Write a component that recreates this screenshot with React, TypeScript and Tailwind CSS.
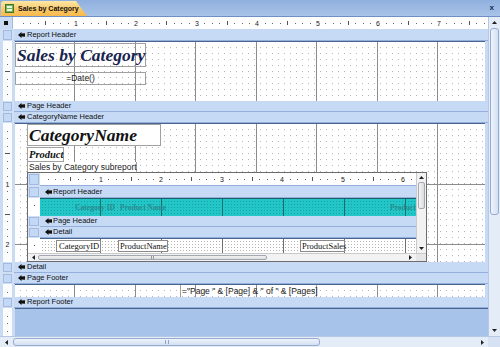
import React from "react";

const INCH = 60.5;

// design surface backgrounds: inch lines on top of a dot grid
const GRID_MAIN =
  "bg-white [background-image:repeating-linear-gradient(90deg,transparent_0_59.5px,#8c8c8c_59.5px_60.5px),repeating-linear-gradient(180deg,transparent_0_59.5px,#8c8c8c_59.5px_60.5px),linear-gradient(90deg,#fff_5px,transparent_5px),linear-gradient(#fff_5px,#b8b8b8_5px)] [background-size:auto,auto,6px_6px,6px_6px]";
const GRID_TEAL =
  "bg-[#20c3c3] [background-image:repeating-linear-gradient(90deg,transparent_0_60px,#166f6f_60px_61px),linear-gradient(90deg,#22c6c6_2px,transparent_2px),linear-gradient(#22c6c6_2px,#17a3a3_2px)] [background-size:auto,3px_3px,3px_3px]";
const GRID_FINE =
  "bg-white [background-image:repeating-linear-gradient(90deg,transparent_0_60px,#707070_60px_61px),linear-gradient(90deg,#fff_2px,transparent_2px),linear-gradient(#fff_2px,#b4b4b4_2px)] [background-size:auto,3px_3px,3px_3px]";

function HRuler({ width, origin, height }: { width: number; origin: number; height: number }) {
  const marks: React.ReactNode[] = [];
  const mid = Math.floor(height / 2);
  for (let i = 1; origin + (i * INCH) / 8 < width - 2; i++) {
    const x = Math.round(origin + (i * INCH) / 8);
    if (i % 8 === 0)
      marks.push(
        <text key={i} x={x} y={mid + 3} fontSize={7} textAnchor="middle" fill="#1a1a1a" fontFamily="Liberation Sans, Arial, sans-serif">
          {i / 8}
        </text>,
      );
    else if (i % 4 === 0) marks.push(<rect key={i} x={x} y={mid - 2} width={1} height={4} fill="#555" />);
    else marks.push(<rect key={i} x={x} y={mid} width={1} height={1} fill="#666" />);
  }
  return (
    <svg width={width} height={height} className="block">
      {marks}
    </svg>
  );
}

function VRuler({ height }: { height: number }) {
  const marks: React.ReactNode[] = [];
  for (let i = 1; (i * INCH) / 8 < height - 2; i++) {
    const y = Math.round((i * INCH) / 8);
    if (i % 8 === 0)
      marks.push(
        <text key={i} x={4.5} y={y + 3} fontSize={7} textAnchor="middle" fill="#1a1a1a" fontFamily="Liberation Sans, Arial, sans-serif">
          {i / 8}
        </text>,
      );
    else if (i % 4 === 0) marks.push(<rect key={i} x={2} y={y} width={5} height={1} fill="#555" />);
    else marks.push(<rect key={i} x={4} y={y} width={1} height={1} fill="#666" />);
  }
  return (
    <svg width={9} height={height} className="block">
      {marks}
    </svg>
  );
}

function Tri({ dir }: { dir: "up" | "down" | "left" | "right" }) {
  const vertical = dir === "up" || dir === "down";
  const pts = {
    up: "0,3 2.5,0 5,3",
    down: "0,0 5,0 2.5,3",
    left: "3,0 3,5 0,2.5",
    right: "0,0 0,5 3,2.5",
  }[dir];
  return (
    <svg width={vertical ? 5 : 3} height={vertical ? 3 : 5} className="block">
      <polygon points={pts} fill="#222" />
    </svg>
  );
}

function SectionIcon() {
  return (
    <svg width={7} height={6} className="block shrink-0">
      <path d="M0 3 L3.5 0 L3.5 1.6 L7 1.2 L7 4.8 L3.5 4.4 L3.5 6 Z" fill="#111" />
    </svg>
  );
}

function MainBar({ label, hClass }: { label: string; hClass: string }) {
  return (
    <div className={`flex shrink-0 ${hClass}`}>
      <div className="flex w-[14px] bg-[#d0dff4] py-px pr-[2px] pl-[3px]">
        <div className="flex-1 border border-[#a2bae0] bg-[#c3d8f4]" />
      </div>
      <div className="flex flex-1 items-center gap-[2px] border-b border-[#94afdb] bg-[#c6daf6] pl-[4px] text-[7.5px] text-[#111]">
        <SectionIcon />
        <span>{label}</span>
      </div>
    </div>
  );
}

function SubBar({ label, hClass }: { label: string; hClass: string }) {
  return (
    <div className={`flex shrink-0 ${hClass}`}>
      <div className="flex w-[12px] bg-[#d0dff4] p-px">
        <div className="flex-1 border border-[#a2bae0] bg-[#c3d8f4]" />
      </div>
      <div className="flex flex-1 items-center gap-px border-b border-[#94afdb] bg-[#c6daf6] pl-[5px] text-[7.5px] text-[#111]">
        <SectionIcon />
        <span>{label}</span>
      </div>
    </div>
  );
}

function MainSection({ hClass, rulerH, children }: { hClass: string; rulerH: number; children?: React.ReactNode }) {
  return (
    <div className={`flex shrink-0 ${hClass}`}>
      <div className="w-[15px] bg-[#cbdbf2] px-[3px]">
        <div className="h-full overflow-hidden bg-[#fbfcfe]">
          <VRuler height={rulerH} />
        </div>
      </div>
      <div className={`w-[470px] border-t border-[#48658f] ${GRID_MAIN}`}>{children}</div>
      <div className="w-[3px] bg-[#c6daf6]" />
    </div>
  );
}

function SubGutter() {
  return (
    <div className="flex w-[12px] shrink-0 justify-center bg-white">
      <div className="mt-[7px] h-px w-px bg-[#555]" />
    </div>
  );
}

export default function App() {
  return (
    <div className="flex h-[347px] w-[500px] flex-col overflow-hidden bg-[#c6daf6] font-['Liberation_Sans',Arial,sans-serif]">
      {/* document tab strip */}
      <div className="flex h-[17px] shrink-0 items-end justify-between border-b border-[#6f8fc4] bg-[linear-gradient(#8fb0de,#a9c3e8)] pl-px">
        <div className="flex h-[15px] w-[86px] items-center gap-[4px] rounded-tl-[3px] bg-[linear-gradient(#fde7a6,#fbc867_55%,#f8b94b)] pl-[4px] [clip-path:polygon(0_0,75px_0,86px_100%,0_100%)]">
          <svg width={9} height={9} className="block shrink-0">
            <rect x={0.5} y={0.5} width={8} height={8} fill="#78b35c" stroke="#3d7a2b" />
            <rect x={2} y={2} width={5} height={2} fill="#eaf6e2" />
            <rect x={2} y={5} width={5} height={2} fill="#eaf6e2" />
          </svg>
          <span className="text-[7px] leading-none font-bold text-[#111]">Sales by Category</span>
        </div>
        <span className="mr-[6px] mb-[4px] text-[8px] leading-none font-bold text-[#1c2c4c]">x</span>
      </div>

      <div className="flex h-[319px] shrink-0">
        <div className="flex w-[488px] flex-col">
          {/* top ruler */}
          <div className="flex h-[12px] shrink-0">
            <div className="flex w-[13px] items-center justify-center border-r border-[#a2bae0] bg-[#c9daf3]">
              <div className="h-[4px] w-[4px] bg-[#111]" />
            </div>
            <div className="flex-1 bg-white">
              <HRuler width={475} origin={2} height={12} />
            </div>
          </div>

          <MainBar label="Report Header" hClass="h-[12px]" />
          <MainSection hClass="h-[60px]" rulerH={59}>
            <div className="flex flex-col">
              <div className="mt-px flex h-[24px] w-[131px] items-center border border-[#a0a0a0] pl-px font-['Liberation_Serif','Times_New_Roman',serif] text-[17.5px] font-bold whitespace-nowrap text-[#17244f] italic">
                Sales by Category
              </div>
              <div className="mt-[5px] flex h-[13px] w-[131px] items-center justify-center border border-[#a0a0a0] text-[8.5px] text-[#222]">
                =Date()
              </div>
            </div>
          </MainSection>
          <MainBar label="Page Header" hClass="h-[11px]" />
          <MainBar label="CategoryName Header" hClass="h-[11px]" />
          <MainSection hClass="h-[139px]" rulerH={138}>
            <div className="flex flex-col pl-[12px]">
              <div className="flex h-[22px] w-[134px] items-center border border-[#a0a0a0] bg-white pl-[1px] font-['Liberation_Serif','Times_New_Roman',serif] text-[17.5px] font-bold text-[#111] italic">
                CategoryName
              </div>
              <div className="mt-px flex h-[15px] w-[37px] items-center border border-[#a0a0a0] bg-white pl-px font-['Liberation_Serif','Times_New_Roman',serif] text-[10.5px] font-bold text-[#111] italic">
                Product
              </div>
              <div className="h-[10px] w-[110px] border-x border-[#a0a0a0] bg-white pl-px text-[8.5px] leading-[10px] whitespace-nowrap text-[#222]">
                Sales by Category subreport
              </div>

              {/* subreport control */}
              <div className="flex h-[90px] w-[400px] flex-col border border-[#6c6c6c] bg-white">
                <div className="flex h-[80px]">
                  <div className="flex w-[388px] flex-col">
                    <div className="flex h-[13px] shrink-0">
                      <div className="flex w-[12px] bg-[#d0dff4] p-px">
                        <div className="flex-1 border border-[#a2bae0] bg-[#c3d8f4]" />
                      </div>
                      <div className="flex-1 border-b border-[#94afdb] bg-white">
                        <HRuler width={376} origin={0} height={12} />
                      </div>
                    </div>
                    <SubBar label="Report Header" hClass="h-[12px]" />
                    <div className="flex h-[18px] shrink-0">
                      <SubGutter />
                      <div className={`flex min-w-0 flex-1 items-center overflow-hidden border-t border-[#1b5f6a] font-['Liberation_Serif','Times_New_Roman',serif] text-[7.5px] font-bold whitespace-nowrap text-[#2b8a8f] ${GRID_TEAL}`}>
                        <span className="w-[76px] shrink-0 pr-px text-right">Category ID</span>
                        <span className="ml-[3px] w-[271px] shrink-0 pl-px">Product Name</span>
                        <span className="min-w-0 overflow-hidden">ProductSales</span>
                      </div>
                    </div>
                    <SubBar label="Page Header" hClass="h-[11px]" />
                    <SubBar label="Detail" hClass="h-[11px]" />
                    <div className="flex h-[15px] shrink-0">
                      <SubGutter />
                      <div className={`flex flex-1 items-center border-t border-[#48658f] font-['Liberation_Serif','Times_New_Roman',serif] text-[8.5px] text-[#111] ${GRID_FINE}`}>
                        <div className="ml-[16px] h-[12px] w-[45px] border border-[#8a8a8a] bg-white pl-[2px] leading-[10px]">CategoryID</div>
                        <div className="ml-[17px] h-[12px] w-[50px] border border-[#8a8a8a] bg-white pl-px leading-[10px] whitespace-nowrap">ProductName</div>
                        <div className="ml-[132px] h-[12px] w-[45px] border border-[#8a8a8a] bg-white pl-px leading-[10px] whitespace-nowrap">ProductSales</div>
                      </div>
                    </div>
                  </div>
                  {/* subreport vertical scrollbar */}
                  <div className="flex w-[10px] flex-col border-l border-[#c9c9c9] bg-[#f2f2f2]">
                    <div className="flex h-[9px] items-center justify-center">
                      <Tri dir="up" />
                    </div>
                    <div className="mx-px h-[27px] rounded-[2px] border border-[#a3a9b4] bg-[linear-gradient(90deg,#f4f4f4,#dcdcdc)]" />
                    <div className="flex-1" />
                    <div className="flex h-[9px] items-center justify-center">
                      <Tri dir="down" />
                    </div>
                  </div>
                </div>
                {/* subreport horizontal scrollbar */}
                <div className="flex h-[9px] border-t border-[#c9c9c9] bg-[#f2f2f2]">
                  <div className="flex w-[10px] items-center justify-center">
                    <Tri dir="left" />
                  </div>
                  <div className="my-px flex w-[229px] items-center justify-center rounded-[2px] border border-[#a3a9b4] bg-[linear-gradient(#f4f4f4,#dcdcdc)]">
                    <div className="h-[3px] w-[3px] border-x border-[#999]" />
                  </div>
                  <div className="flex-1" />
                  <div className="flex w-[11px] items-center justify-center">
                    <Tri dir="right" />
                  </div>
                  <div className="w-[10px] bg-[#e6e6e6]" />
                </div>
              </div>
            </div>
          </MainSection>
          <MainBar label="Detail" hClass="h-[11px]" />
          <MainBar label="Page Footer" hClass="h-[11px]" />
          <MainSection hClass="h-[13px]" rulerH={12}>
            <div className="ml-[165px] flex h-[12px] w-[137px] items-center border-x border-[#a0a0a0] pl-px text-[8.5px] whitespace-nowrap text-[#222]">
              ="Page " &amp; [Page] &amp; " of " &amp; [Pages]
            </div>
          </MainSection>
          <MainBar label="Report Footer" hClass="h-[11px]" />

          {/* empty space below the report */}
          <div className="flex flex-1">
            <div className="w-[15px] bg-[#cbdbf2] px-[3px]">
              <div className="h-full overflow-hidden bg-[#fbfcfe]">
                <VRuler height={27} />
              </div>
            </div>
            <div className="flex-1 border-t border-[#48658f] bg-[#a7c3ea]" />
          </div>
        </div>

        {/* main vertical scrollbar */}
        <div className="flex w-[12px] flex-col border-l border-[#b6c8e4] bg-[#e4ecf8]">
          <div className="flex h-[11px] items-center justify-center">
            <Tri dir="up" />
          </div>
          <div className="mx-px h-[187px] rounded-[3px] border border-[#96abcf] bg-[linear-gradient(90deg,#eef3fb,#d3e0f3)]" />
          <div className="flex-1" />
          <div className="flex h-[11px] items-center justify-center">
            <Tri dir="down" />
          </div>
        </div>
      </div>

      {/* main horizontal scrollbar */}
      <div className="flex h-[11px] shrink-0 border-t border-[#b6c8e4] bg-[#e4ecf8]">
        <div className="flex w-[13px] items-center justify-center">
          <Tri dir="left" />
        </div>
        <div className="my-px flex w-[307px] items-center justify-center rounded-[3px] border border-[#96abcf] bg-[linear-gradient(#eef3fb,#d3e0f3)]">
          <div className="h-[4px] w-[4px] border-x border-[#8fa3c4]" />
        </div>
        <div className="flex-1" />
        <div className="flex w-[12px] items-center justify-center">
          <Tri dir="right" />
        </div>
        <div className="w-[12px] bg-[#d6e2f3]" />
      </div>
    </div>
  );
}
